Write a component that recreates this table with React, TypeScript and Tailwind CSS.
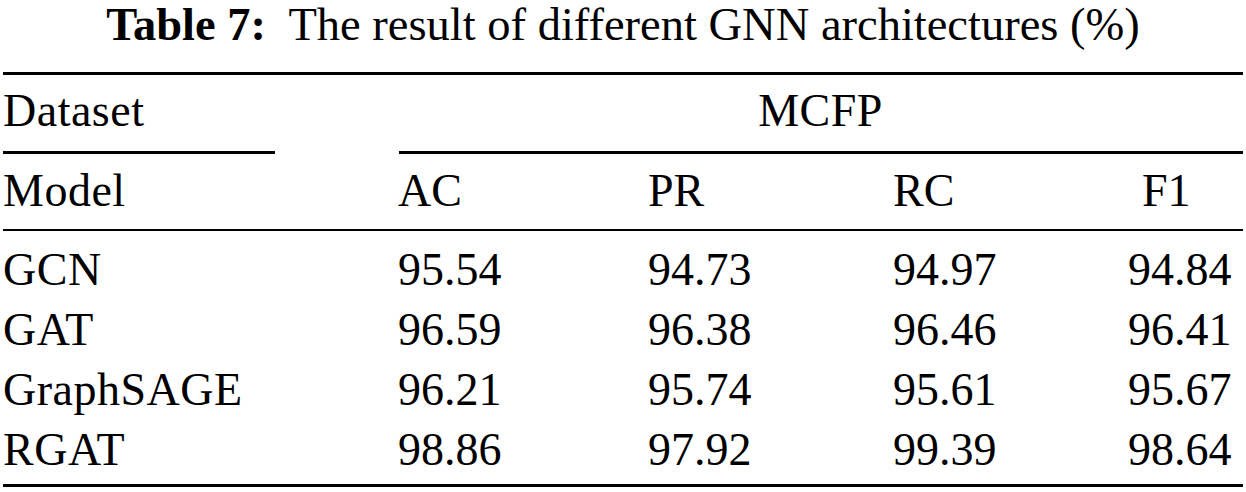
import React from 'react';

const rows = [
  { model: 'GCN', ac: '95.54', pr: '94.73', rc: '94.97', f1: '94.84' },
  { model: 'GAT', ac: '96.59', pr: '96.38', rc: '96.46', f1: '96.41' },
  { model: 'GraphSAGE', ac: '96.21', pr: '95.74', rc: '95.61', f1: '95.67' },
  { model: 'RGAT', ac: '98.86', pr: '97.92', rc: '99.39', f1: '98.64' },
];

const grid = 'grid grid-cols-[395px_250px_245px_235px_1fr]';

export default function App() {
  return (
    <div className="w-[1246px] h-[492px] bg-white text-black font-['Liberation_Serif','Times_New_Roman',serif] px-[3px] overflow-hidden">
      <div className="text-center text-[46.5px] leading-[50px] whitespace-pre">
        <span className="font-bold">Table 7:</span>
        {'  The result of different GNN architectures (%)'}
      </div>

      <div className="mt-[22px] h-[3px] bg-black" />

      <div className={`${grid} text-[46px] leading-[60px] mt-[6px]`}>
        <div className="tracking-[0.5px]">Dataset</div>
        <div className="col-span-4 text-center tracking-[0.5px]">MCFP</div>
      </div>

      <div className={`${grid} mt-[10px]`}>
        <div className="w-[272px] h-[3px] bg-black" />
        <div className="col-span-4 ml-[1px] h-[3px] bg-black" />
      </div>

      <div className={`${grid} text-[46px] leading-[60px] mt-[7px]`}>
        <div className="tracking-[0.5px]">Model</div>
        <div>AC</div>
        <div>PR</div>
        <div>RC</div>
        <div className="pl-[14px]">F1</div>
      </div>

      <div className="mt-[8px] h-[2px] bg-black" />

      <div className="mt-[9px] text-[46px] leading-[60px]">
        {rows.map((r) => (
          <div key={r.model} className={grid}>
            <div className="tracking-[0.5px]">{r.model}</div>
            <div>{r.ac}</div>
            <div>{r.pr}</div>
            <div>{r.rc}</div>
            <div>{r.f1}</div>
          </div>
        ))}
      </div>

      <div className="mt-[4px] h-[3px] bg-black" />
    </div>
  );
}
